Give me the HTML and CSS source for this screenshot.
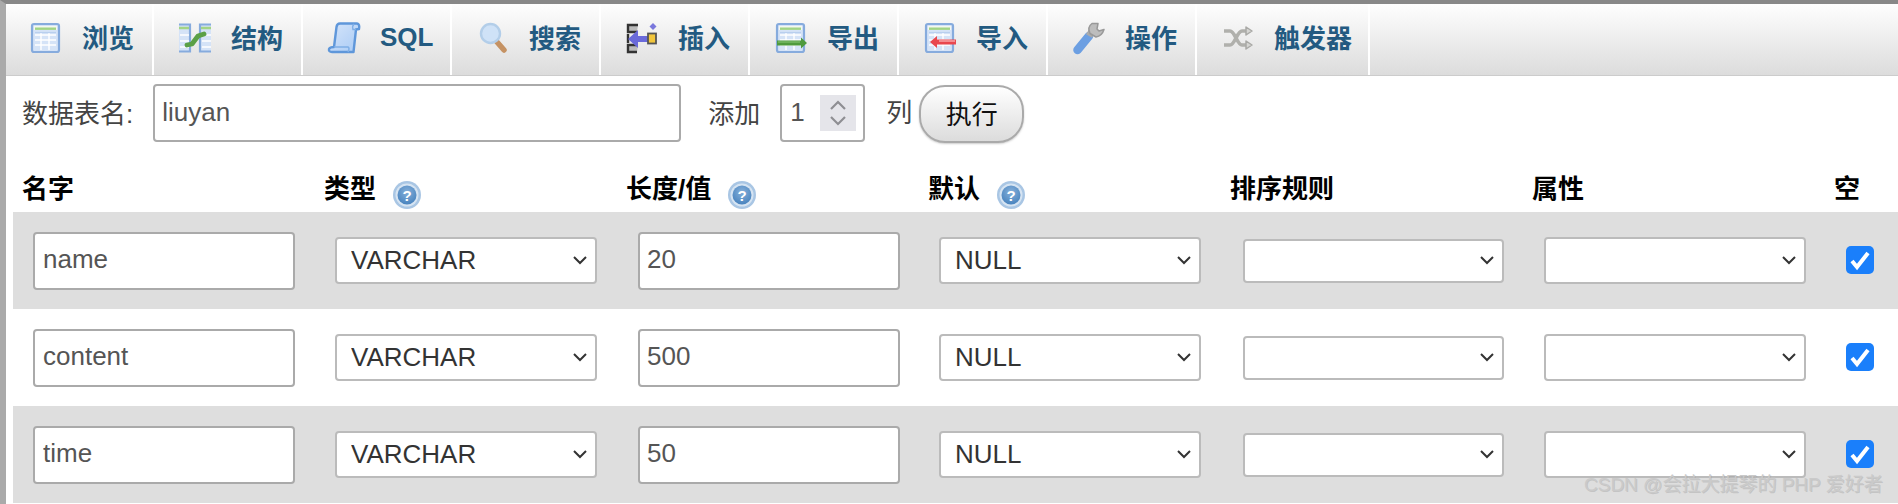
FILE: index.html
```html
<!DOCTYPE html>
<html lang="zh-CN">
<head>
<meta charset="utf-8">
<title>phpMyAdmin</title>
<link rel="stylesheet" href="styles.css">
</head>
<body>
<svg class="sprite" width="0" height="0" aria-hidden="true">
  <defs>
    <radialGradient id="helpcore" cx="50%" cy="35%" r="70%">
      <stop offset="0" stop-color="#86b0da"/>
      <stop offset="1" stop-color="#4480bc"/>
    </radialGradient>
    <linearGradient id="scroll" x1="0" y1="0" x2="1" y2="1">
      <stop offset="0" stop-color="#d6e5fa"/>
      <stop offset="1" stop-color="#a9cbf5"/>
    </linearGradient>
    <symbol id="grid" viewBox="0 0 34 34">
      <rect x="3" y="3" width="27" height="28" rx="2" fill="#d5e3f7" stroke="#86abdd" stroke-width="2.200"/>
      <rect x="5" y="5" width="23" height="4" fill="#f5f8f0"/>
      <rect x="6" y="6.500" width="21" height="2.400" fill="#a2d485"/>
      <path d="M6 14h21M6 19h21M6 24h21M12 11v18M20 11v18" stroke="#fff" stroke-width="1.400" fill="none"/>
      <path d="M6 11.500h21" stroke="#b9cfee" stroke-width="1.200"/>
    </symbol>
    <symbol id="help" viewBox="0 0 28 28">
      <circle cx="14" cy="14" r="14" fill="#a9c6e4"/>
      <circle cx="14" cy="14" r="11.500" fill="#d6e4f2"/>
      <circle cx="14" cy="14" r="9.500" fill="url(#helpcore)"/>
      <text x="14" y="19.500" class="help-mark">?</text>
    </symbol>
  </defs>
</svg>

<div class="frame">
  <nav class="tabs">
    <a class="tab tab-first">
      <span class="glyph"><svg width="34" height="34"><use href="#grid"/></svg></span>
      <span class="cjk">浏览</span>
    </a>
    <a class="tab">
      <span class="glyph">
        <svg width="34" height="34" viewBox="0 0 34 34">
          <path d="M1 3.500h11v27H1" fill="#d5e3f7" stroke="#86abdd" stroke-width="2.200"/>
          <path d="M33 3.500H22v27h11" fill="#d5e3f7" stroke="#86abdd" stroke-width="2.200"/>
          <path d="M1 7h10M23 7h10" stroke="#a2d485" stroke-width="2.400"/>
          <path d="M2 14h9M2 20h9M2 26h9M24 14h9M24 20h9M24 26h9" stroke="#fff" stroke-width="1.400"/>
          <path d="M9 24l5-1 6-8 6-2" fill="none" stroke="#5ba046" stroke-width="4.800" stroke-linecap="round" stroke-linejoin="round"/>
        </svg>
      </span>
      <span class="cjk">结构</span>
    </a>
    <a class="tab">
      <span class="glyph">
        <svg width="34" height="34" viewBox="0 0 34 34">
          <path d="M7 26 9.500 6Q10 2.500 13 2.500H30Q33 3 32 8L29 8.500 26.500 31H5Q1.500 31 2 28 3 26 7 26Z" fill="url(#scroll)" stroke="#5f97da" stroke-width="2.400" stroke-linejoin="round"/>
          <path d="M7 26H21Q23 27 21 31" fill="none" stroke="#7fafe6" stroke-width="1.500"/>
          <path d="M27 3Q25 5 26 8.500H29" fill="none" stroke="#7fafe6" stroke-width="1.500"/>
        </svg>
      </span>
      <span>SQL</span>
    </a>
    <a class="tab">
      <span class="glyph">
        <svg width="34" height="34" viewBox="0 0 34 34">
          <path d="M21 21l7 8" stroke="#c59263" stroke-width="5.500" stroke-linecap="round"/>
          <circle cx="14.500" cy="12.500" r="9.500" fill="#cfe2f7" stroke="#b3cee9" stroke-width="2.400"/>
        </svg>
      </span>
      <span class="cjk">搜索</span>
    </a>
    <a class="tab">
      <span class="glyph">
        <svg width="34" height="34" viewBox="0 0 34 34">
          <path d="M13 4H3v7h9M13 24H3v7h9M3 13v9" fill="#bbb" stroke="#333" stroke-width="2.400"/>
          <path d="M3 18l10-9v6h10v6H13v6z" fill="#6a6ada"/>
          <rect x="23" y="12.500" width="8" height="10" fill="#f2c63c" stroke="#555" stroke-width="1.800"/>
          <path d="M28 2l3.500 3.500-3.500 3.500-3.500-3.500z" fill="#7a78dc"/>
        </svg>
      </span>
      <span class="cjk">插入</span>
    </a>
    <a class="tab">
      <span class="glyph">
        <svg width="34" height="34" viewBox="0 0 34 34">
          <use href="#grid"/>
          <path d="M3 19.500h24v-3l6 5.500-6 5.500v-3H3z" fill="#4f9a3d"/>
          <path d="M4 21h22" stroke="#8bc77a" stroke-width="1"/>
        </svg>
      </span>
      <span class="cjk">导出</span>
    </a>
    <a class="tab">
      <span class="glyph">
        <svg width="34" height="34" viewBox="0 0 34 34">
          <use href="#grid"/>
          <path d="M33 18.500H14v-3.500L7 21l7 6v-3.500h19z" fill="#e9474e"/>
          <path d="M16 20h16" stroke="#f7a4a8" stroke-width="1.500"/>
        </svg>
      </span>
      <span class="cjk">导入</span>
    </a>
    <a class="tab">
      <span class="glyph">
        <svg width="34" height="34" viewBox="0 0 34 34">
          <path d="M5.500 29 17 15" stroke="#6c9fe2" stroke-width="8.500" stroke-linecap="round"/>
          <path d="M17 15 20 10" stroke="#aaa" stroke-width="7"/>
          <path d="M20 2.500Q15 6 18 12.500L24 16Q30 15 32 8.500L27 10 25 8 26 2.500z" fill="#bdbdbd" stroke="#999" stroke-width="1.500" stroke-linejoin="round"/>
        </svg>
      </span>
      <span class="cjk">操作</span>
    </a>
    <a class="tab tab-last">
      <span class="glyph">
        <svg width="34" height="34" viewBox="0 0 34 34">
          <path d="M3 10h6c5 0 7 14 12 14h6M3 24h6c5 0 7-14 12-14h6" fill="none" stroke="#b0b0ac" stroke-width="3.600"/>
          <path d="M25 6l6 4-6 4zM25 20l6 4-6 4z" fill="#d6d6d3" stroke="#a9a9a6" stroke-width="1.500" stroke-linejoin="round"/>
        </svg>
      </span>
      <span class="cjk">触发器</span>
    </a>
  </nav>

  <form class="toolbar">
    <label class="tool-label">数据表名:</label>
    <input class="table-name" type="text" value="liuyan">
    <span class="add-label">添加</span>
    <div class="numbox">
      <span class="numval">1</span>
      <span class="spin">
        <svg width="18" height="28" viewBox="0 0 18 28">
          <path d="M2 10l7-7 7 7M2 18l7 7 7-7" fill="none" stroke="#8e8e93" stroke-width="2.200"/>
        </svg>
      </span>
    </div>
    <span class="col-label">列</span>
    <button class="go" type="button">执行</button>
  </form>

  <div class="grid head">
    <div class="th">名字</div>
    <div class="th">类型<svg class="help" width="28" height="28"><use href="#help"/></svg></div>
    <div class="th">长度/值<svg class="help" width="28" height="28"><use href="#help"/></svg></div>
    <div class="th">默认<svg class="help" width="28" height="28"><use href="#help"/></svg></div>
    <div class="th">排序规则</div>
    <div class="th">属性</div>
    <div class="th">空</div>
  </div>

  <div class="grid row shaded">
    <div class="td"><input class="field" type="text" value="name"></div>
    <div class="td"><select class="pick type"><option>VARCHAR</option></select></div>
    <div class="td"><input class="field" type="text" value="20"></div>
    <div class="td"><select class="pick type"><option>NULL</option></select></div>
    <div class="td"><select class="pick sort"><option></option></select></div>
    <div class="td"><select class="pick attr"><option></option></select></div>
    <div class="td"><input class="tick" type="checkbox" checked></div>
  </div>
  <div class="grid row">
    <div class="td"><input class="field" type="text" value="content"></div>
    <div class="td"><select class="pick type"><option>VARCHAR</option></select></div>
    <div class="td"><input class="field" type="text" value="500"></div>
    <div class="td"><select class="pick type"><option>NULL</option></select></div>
    <div class="td"><select class="pick sort"><option></option></select></div>
    <div class="td"><select class="pick attr"><option></option></select></div>
    <div class="td"><input class="tick" type="checkbox" checked></div>
  </div>
  <div class="grid row shaded">
    <div class="td"><input class="field" type="text" value="time"></div>
    <div class="td"><select class="pick type"><option>VARCHAR</option></select></div>
    <div class="td"><input class="field" type="text" value="50"></div>
    <div class="td"><select class="pick type"><option>NULL</option></select></div>
    <div class="td"><select class="pick sort"><option></option></select></div>
    <div class="td"><select class="pick attr"><option></option></select></div>
    <div class="td"><input class="tick" type="checkbox" checked></div>
  </div>
</div>

<div class="watermark">CSDN @会拉大提琴的 PHP 爱好者</div>
</body>
</html>
```

FILE: styles.css
```css
* {
  box-sizing: border-box;
}

html,
body {
  margin: 0;
  height: 504px;
  overflow: hidden;
  background: #fff;
}

body {
  position: relative;
  font-family: "Liberation Sans", "Noto Sans CJK SC", sans-serif;
  font-size: 26px;
  color: #444;
}

.sprite {
  position: absolute;
}

.help-mark {
  font-family: "Liberation Sans", sans-serif;
  font-size: 15px;
  font-weight: 700;
  fill: #fff;
  text-anchor: middle;
}

.frame {
  height: 504px;
  border-top: 4px solid #888;
  border-left: 6px solid #aaa;
}

/* Tabs */
.tabs {
  display: flex;
  height: 72px;
  background: linear-gradient(#fefefe, #dcdcdc);
  border-bottom: 1px solid #ccc;
}

.tab {
  display: flex;
  align-items: center;
  width: 149px;
  height: 71px;
  padding: 0 0 4px 24px;
  border-right: 2px solid #fff;
  color: #235a81;
  font-weight: 700;
  font-size: 26px;
}

.tab-first {
  width: 148px;
  padding-left: 23px;
}

.tab-last {
  width: 173px;
}

.glyph {
  display: flex;
  width: 34px;
  margin-right: 19px;
}

.glyph svg {
  filter: blur(0.55px);
}

.cjk {
  margin-bottom: 2px;
}

/* Top form line */
.toolbar {
  display: flex;
  align-items: center;
  height: 74px;
  padding: 8px 0 8px 16px;
}

.tool-label {
  white-space: nowrap;
  margin-bottom: 3px;
}

.table-name {
  width: 528px;
  height: 58px;
  margin-left: 20px;
  padding: 0 7px 2px;
  border: 2px solid #aaa;
  border-radius: 4px;
  font: inherit;
  color: #555;
  background: #fff;
}

.add-label {
  margin-left: 27px;
  margin-bottom: 3px;
}

.numbox {
  display: flex;
  align-items: center;
  justify-content: space-between;
  width: 85px;
  height: 58px;
  margin-left: 20px;
  padding: 0 7px 0 8px;
  border: 2px solid #aaa;
  border-radius: 4px;
  color: #555;
}

.numval {
  margin-bottom: 2px;
}

.spin {
  display: flex;
  align-items: center;
  justify-content: center;
  width: 36px;
  height: 36px;
  background: #e5e5ea;
}

.col-label {
  margin-left: 21px;
  margin-bottom: 6px;
}

.go {
  width: 105px;
  height: 58px;
  margin: 2px 0 0 7px;
  padding: 0 0 3px;
  border: 2px solid #aaa;
  border-radius: 26px;
  background: linear-gradient(#fff, #dcdcdc);
  box-shadow: 0 1px 2px #ccc;
  font: inherit;
  color: #111;
}

/* Column grid */
.grid {
  display: grid;
  grid-template-columns: repeat(6, 302px) 1fr;
  margin-left: 7px;
}

.head {
  height: 62px;
}

.th {
  display: flex;
  align-items: flex-start;
  padding: 24px 0 0 9px;
  font-weight: 700;
  line-height: 30px;
  color: #000;
}

.help {
  margin: 7px 0 0 17px;
}

.row {
  height: 97px;
}

.shaded {
  background: #dedede;
}

.td {
  display: flex;
  align-items: center;
}

.field {
  width: 262px;
  height: 58px;
  margin-left: 21px;
  padding: 0 7px 2px;
  border: 2px solid #aaa;
  border-radius: 4px;
  font: inherit;
  color: #555;
  background: #fff;
}

.td:first-child .field {
  margin-left: 20px;
  padding-left: 8px;
}

.pick {
  appearance: none;
  -webkit-appearance: none;
  width: 262px;
  height: 47px;
  padding: 0 30px 2px 14px;
  border: 2px solid #bbb;
  border-radius: 4px;
  font: inherit;
  color: #333;
  background: #fff url("data:image/svg+xml,%3Csvg xmlns='http://www.w3.org/2000/svg' width='14' height='9' viewBox='0 0 14 9'%3E%3Cpath d='M1 1l6 6 6-6' fill='none' stroke='%23333' stroke-width='2'/%3E%3C/svg%3E") no-repeat right 8px center;
}

.type {
  margin-left: 20px;
}

.sort {
  width: 261px;
  height: 44px;
  margin-left: 22px;
}

.attr {
  margin-left: 21px;
}

.tick {
  appearance: none;
  -webkit-appearance: none;
  width: 28px;
  height: 28px;
  margin: 0 0 1px 21px;
  border-radius: 5px;
  background: #1a7ffb url("data:image/svg+xml,%3Csvg xmlns='http://www.w3.org/2000/svg' width='28' height='28' viewBox='0 0 28 28'%3E%3Cpath d='M6 15l5 6 11-14' fill='none' stroke='%23fff' stroke-width='4'/%3E%3C/svg%3E") no-repeat center;
}

.watermark {
  position: absolute;
  left: 1584px;
  top: 473px;
  font-size: 19px;
  line-height: 24px;
  white-space: nowrap;
  color: #cacaca;
  text-shadow: 1px 1px 0 #9a9a9a66;
}
```
